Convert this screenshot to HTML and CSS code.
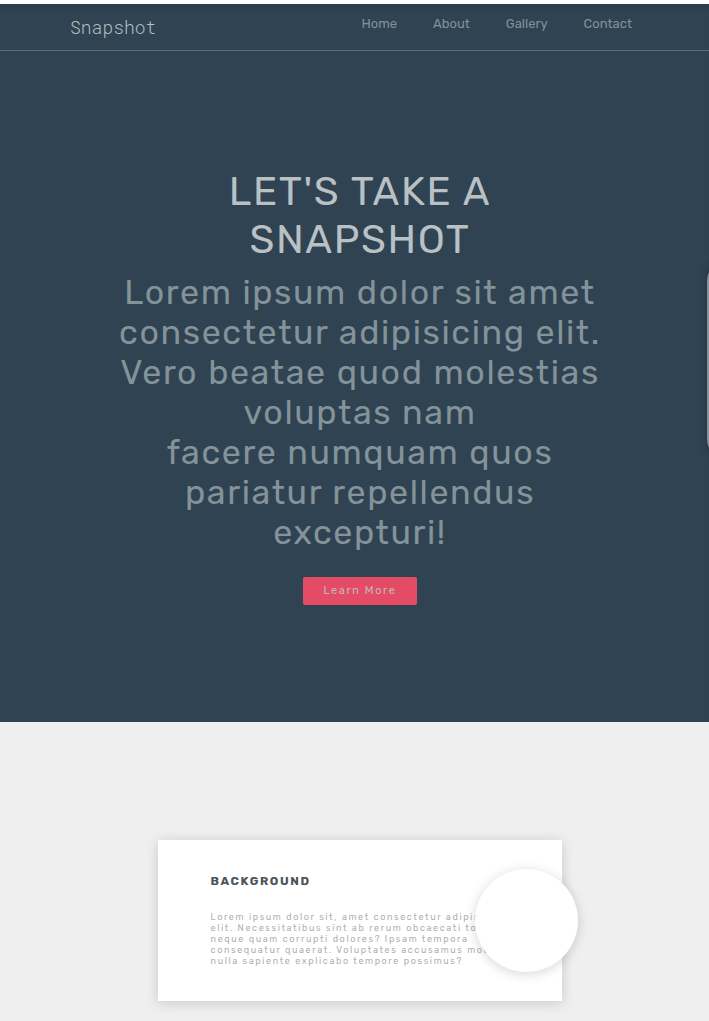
FILE: index.html
```html
<!DOCTYPE html>
<html lang="en">
<head>
<meta charset="utf-8">
<meta name="viewport" content="width=device-width, initial-scale=1">
<title>Snapshot</title>
<link rel="stylesheet" href="styles.css">
</head>
<body>
<div class="top">
  <header class="header">
    <a class="logo" href="#">Snapshot</a>
    <nav class="nav">
      <a href="#home">Home</a>
      <a href="#about">About</a>
      <a href="#gallery">Gallery</a>
      <a href="#contact">Contact</a>
    </nav>
  </header>
  <main class="hero" id="home">
    <h1 class="title">Let's take a<br>snapshot</h1>
    <p class="lead">Lorem ipsum dolor sit amet<br>consectetur adipisicing elit.<br>Vero beatae quod molestias<br>voluptas nam<br>facere numquam quos<br>pariatur repellendus<br>excepturi!</p>
    <button class="button" type="button">Learn More</button>
  </main>
  <div class="side-panel"></div>
</div>
<section class="about" id="about">
  <article class="card">
    <h2 class="card-title">Background</h2>
    <p class="card-text">Lorem ipsum dolor sit, amet consectetur adipisicing<br>elit. Necessitatibus sint ab rerum obcaecati totam<br>neque quam corrupti dolores? Ipsam tempora<br>consequatur quaerat. Voluptates accusamus modi<br>nulla sapiente explicabo tempore possimus?</p>
    <div class="card-circle"></div>
  </article>
</section>
</body>
</html>
```
FILE: styles.css
```css
* {
  box-sizing: border-box;
}

body {
  margin: 0;
  padding-top: 4px;
  background: #fff;
  font-family: Rubik, Roboto, sans-serif;
}

h1, h2, p {
  margin: 0;
  font-weight: 400;
}

.top {
  position: relative;
  overflow: hidden;
  background: #304352;
  box-shadow: inset 0 10px 8px -8px #2b3b48;
}

.header {
  display: flex;
  justify-content: space-between;
  align-items: flex-start;
  padding: 12px 77px 11px 70px;
  border-bottom: 1px solid #606f77;
}

.logo {
  color: #b5bfc4;
  font: 300 18px/23px "Roboto Mono", "Liberation Mono", monospace;
  text-decoration: none;
}

.nav {
  display: flex;
  gap: 36px;
}

.nav a {
  color: #83919a;
  font-size: 13px;
  line-height: 16px;
  text-decoration: none;
}

.hero {
  display: flex;
  flex-direction: column;
  align-items: center;
  padding: 117px 0 117px 11px;
  text-align: center;
}

.title {
  color: #b9c1c5;
  font-size: 40px;
  line-height: 48px;
  letter-spacing: 0.1rem;
  text-transform: uppercase;
}

.lead {
  margin-top: 9px;
  color: #84939a;
  font-size: 34px;
  line-height: 40px;
  letter-spacing: 0.1rem;
  white-space: nowrap;
}

.button {
  margin-top: 24px;
  padding: 0 20px;
  height: 28px;
  border: 0;
  border-radius: 2px;
  background: #e44c65;
  color: #c3b5bd;
  font: 11px/28px Rubik, Roboto, sans-serif;
  letter-spacing: 0.1rem;
}

.side-panel {
  position: absolute;
  top: 257px;
  right: -158px;
  width: 160px;
  height: 198px;
  border-radius: 20px;
  background: #87939b;
  box-shadow: 0 0 8px rgba(20, 30, 55, 0.35);
}

.about {
  padding: 118px 0 80px 11px;
  background: #efefef;
}

.card {
  position: relative;
  width: 58%;
  margin: 0 auto;
  padding: 34px 53px 34px;
  background: #fff;
  box-shadow: 0 2px 12px rgba(0, 0, 0, 0.16);
}

.card-title {
  color: #4b555b;
  font-size: 12px;
  font-weight: 700;
  line-height: 14px;
  letter-spacing: 0.1rem;
  text-transform: uppercase;
}

.card-text {
  margin-top: 24px;
  color: #b0b0b2;
  font-size: 9px;
  line-height: 11px;
  letter-spacing: 0.1rem;
  white-space: nowrap;
}

.card-circle {
  position: absolute;
  top: 29px;
  right: -16px;
  width: 103px;
  height: 103px;
  border-radius: 50%;
  background: #fff;
  box-shadow: 0 2px 12px rgba(0, 0, 0, 0.16);
}
```
